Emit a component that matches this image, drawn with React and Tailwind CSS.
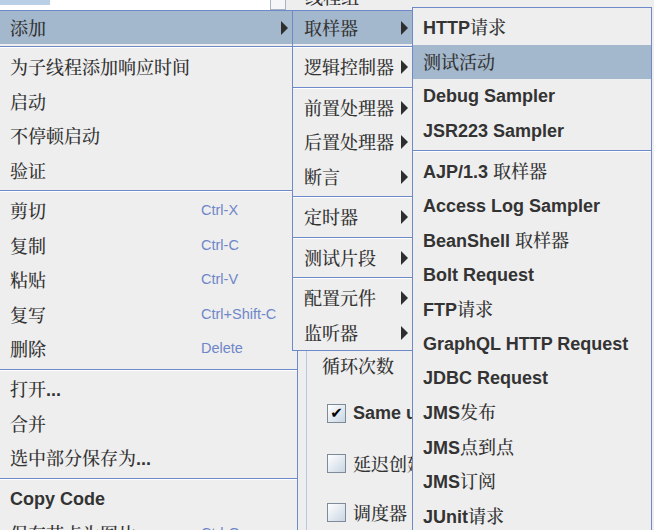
import React from "react";

const CJK = { fontFamily: '"Noto Serif CJK SC", "Noto Sans CJK SC", serif' };

function Label({ text }) {
  const parts = text.split(/([\x00-\x7F]+)/).filter((p) => p.length > 0);
  return (
    <span className="whitespace-pre">
      {parts.map((p, i) =>
        /^[\x00-\x7F]+$/.test(p) ? (
          <span key={i} className="font-['Liberation_Sans',sans-serif] font-bold">
            {p}
          </span>
        ) : (
          <span key={i} className="font-['Noto_Serif_CJK_SC','Noto_Sans_CJK_SC',serif] font-medium">
            {p}
          </span>
        )
      )}
    </span>
  );
}

function Arrow() {
  return <span className="w-0 h-0 border-y-[7px] border-y-transparent border-l-[7px] border-l-[#2e2e2e] shrink-0" />;
}

function Sep() {
  return (
    <div className="h-[6px] flex flex-col justify-center">
      <div className="h-px bg-[#6d89c9]" />
      <div className="h-px bg-white" />
    </div>
  );
}

function Item({ text, shortcut, arrow, hi, first, pad = "pl-[10px]", arrowPad = "pr-[9px]", labelW }) {
  return (
    <div
      className={
        "flex items-center text-[18px] text-[#333] " +
        (first ? "h-[33px] " : "h-[34.5px] ") +
        (hi ? "bg-[#a3b8cc] " : "") +
        pad +
        " " +
        arrowPad
      }
    >
      <span className={labelW ? "w-[191px] shrink-0" : "flex-1"}>
        <Label text={text} />
      </span>
      {shortcut && (
        <span className="font-['Liberation_Sans',sans-serif] text-[14.5px] text-[#6f86c9]">{shortcut}</span>
      )}
      {arrow && <Arrow />}
    </div>
  );
}

function Checkbox({ checked }) {
  return (
    <span className="w-[19px] h-[19px] border border-[#7d8a98] bg-gradient-to-br from-white to-[#c9d6e3] flex items-center justify-center shrink-0">
      {checked && <span className="text-[15px] leading-none text-black font-bold font-['DejaVu_Sans',sans-serif]">✔</span>}
    </span>
  );
}

export default function App() {
  return (
    <div className="relative w-[654px] h-[530px] overflow-hidden bg-[#eeeeee] text-[#333]">
      {/* underlying window content */}
      <div className="flex flex-col">
        <div className="h-[10px] flex">
          <div className="w-[270px] bg-white">
            <div className="w-[50px] h-[5px] bg-[#b8cfe5]" />
          </div>
          <div className="w-[16px] border-x border-b border-[#a9b4c2] bg-[#f4f6f8]" />
          <div className="w-[16px]" />
          <div className="flex-1 overflow-hidden relative">
            <span className="block -mt-[14px] text-[18px] leading-[20px] pl-[3px] font-medium" style={CJK}>
              线程组
            </span>
          </div>
        </div>
        <div className="flex h-[520px]">
          <div className="w-[306px] shrink-0" />
          <div className="flex-1 border-l border-[#b5cbe3] pt-[342px] flex flex-col">
            <div className="h-[30px] flex items-center pl-[15px] text-[18px] font-medium" style={CJK}>
              循环次数
            </div>
            <div className="mt-[10px] flex flex-col">
              <div className="h-[49.5px] flex items-center pl-[20px] gap-[7px] text-[18px]">
                <Checkbox checked />
                <span className="font-['Liberation_Sans',sans-serif] font-bold whitespace-nowrap">Same user on each iteration</span>
              </div>
              <div className="h-[49.5px] flex items-center pl-[20px] gap-[7px] text-[18px]">
                <Checkbox />
                <span className="whitespace-nowrap font-medium" style={CJK}>延迟创建线程直到需要</span>
              </div>
              <div className="h-[49.5px] flex items-center pl-[20px] gap-[7px] text-[18px]">
                <Checkbox />
                <span className="whitespace-nowrap font-medium" style={CJK}>调度器</span>
              </div>
            </div>
          </div>
        </div>
      </div>

      {/* menu 1 */}
      <div className="absolute left-[-1px] top-[10px] w-[299px] border border-[#6d89c9] bg-[#eeeeee] flex flex-col">
        <Item text="添加" arrow hi first />
        <Sep />
        <Item text="为子线程添加响应时间" />
        <Item text="启动" />
        <Item text="不停顿启动" />
        <Item text="验证" />
        <Sep />
        <Item text="剪切" shortcut="Ctrl-X" labelW />
        <Item text="复制" shortcut="Ctrl-C" labelW />
        <Item text="粘贴" shortcut="Ctrl-V" labelW />
        <Item text="复写" shortcut="Ctrl+Shift-C" labelW />
        <Item text="删除" shortcut="Delete" labelW />
        <Sep />
        <Item text="打开..." />
        <Item text="合并" />
        <Item text="选中部分保存为..." />
        <Sep />
        <Item text="Copy Code" />
        <Item text="保存节点为图片" shortcut="Ctrl-G" labelW />
      </div>

      {/* menu 2 */}
      <div className="absolute left-[292px] top-[10px] w-[121px] border border-[#6d89c9] bg-[#eeeeee] flex flex-col">
        <Item text="取样器" arrow hi first pad="pl-[11px]" arrowPad="pr-[4px]" />
        <Sep />
        <Item text="逻辑控制器" arrow pad="pl-[11px]" arrowPad="pr-[4px]" />
        <Sep />
        <Item text="前置处理器" arrow pad="pl-[11px]" arrowPad="pr-[4px]" />
        <Item text="后置处理器" arrow pad="pl-[11px]" arrowPad="pr-[4px]" />
        <Item text="断言" arrow pad="pl-[11px]" arrowPad="pr-[4px]" />
        <Sep />
        <Item text="定时器" arrow pad="pl-[11px]" arrowPad="pr-[4px]" />
        <Sep />
        <Item text="测试片段" arrow pad="pl-[11px]" arrowPad="pr-[4px]" />
        <Sep />
        <Item text="配置元件" arrow pad="pl-[11px]" arrowPad="pr-[4px]" />
        <Item text="监听器" arrow pad="pl-[11px]" arrowPad="pr-[4px]" />
      </div>

      {/* menu 3 */}
      <div className="absolute left-[412px] top-[7px] w-[240px] border border-[#6d89c9] bg-[#eeeeee] pt-[2px] flex flex-col">
        <Item text="HTTP请求" />
        <Item text="测试活动" hi />
        <Item text="Debug Sampler" />
        <Item text="JSR223 Sampler" />
        <Sep />
        <Item text="AJP/1.3 取样器" />
        <Item text="Access Log Sampler" />
        <Item text="BeanShell 取样器" />
        <Item text="Bolt Request" />
        <Item text="FTP请求" />
        <Item text="GraphQL HTTP Request" />
        <Item text="JDBC Request" />
        <Item text="JMS发布" />
        <Item text="JMS点到点" />
        <Item text="JMS订阅" />
        <Item text="JUnit请求" />
        <Item text="Java请求" />
      </div>
    </div>
  );
}
